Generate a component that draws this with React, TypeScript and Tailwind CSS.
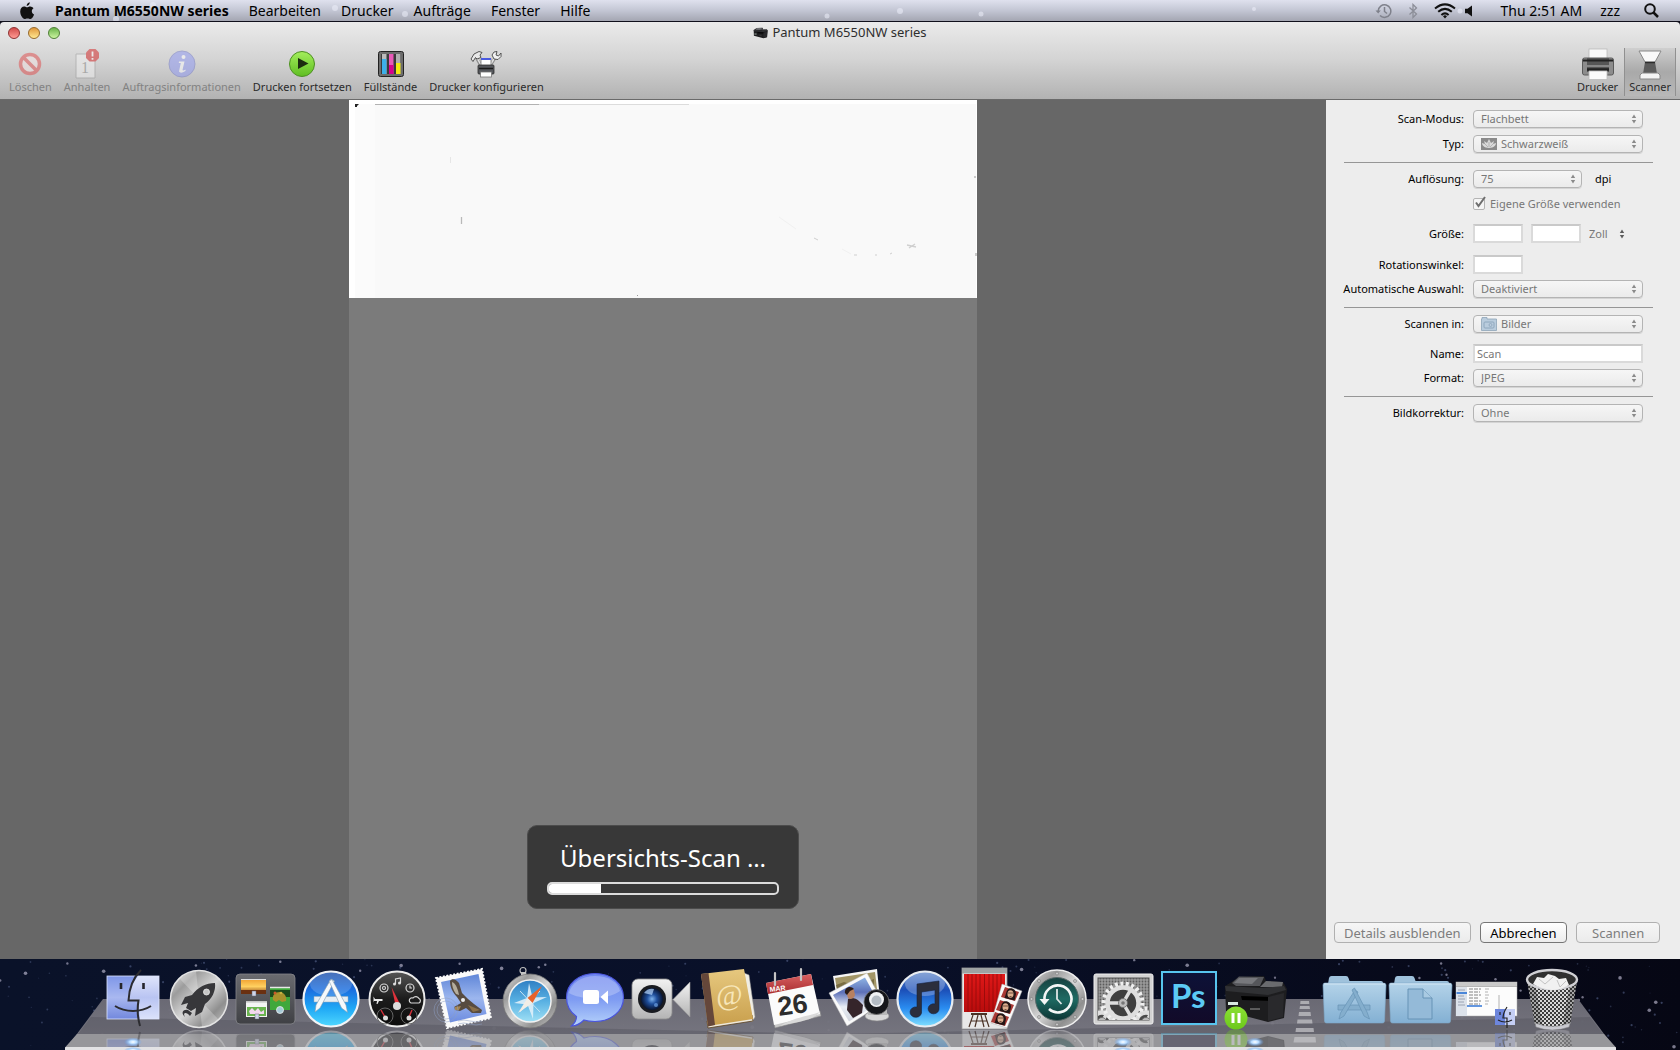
import React from "react";

type Kids = { children?: React.ReactNode };

/* ---------- shared gradients ---------- */

function Grad({ id, stops, x2 = 0, y2 = 1 }: { id: string; stops: string[]; x2?: number; y2?: number }) {
  return (
    <linearGradient id={id} x1="0" y1="0" x2={x2} y2={y2}>
      {stops.map((c, i) => (
        <stop key={i} offset={i / (stops.length - 1)} stopColor={c} />
      ))}
    </linearGradient>
  );
}

function SharedDefs() {
  return (
    <svg width="0" height="0" className="absolute" aria-hidden="true">
      <defs>
        <Grad id="g-finder" stops={["#7e96e8", "#a9b8f0", "#7288dd"]} />
        <Grad id="g-finder-light" stops={["#dfe5fb", "#b9c4f2", "#dbe2fb"]} />
        <Grad id="g-steel" stops={["#e8e8e8", "#9c9c9c", "#d8d8d8", "#8f8f8f", "#cfcfcf"]} x2={1} y2={1} />
        <Grad id="g-dark" stops={["#6a6b70", "#3f4044"]} />
        <Grad id="g-store" stops={["#1f4fa8", "#1b6fe0", "#1fa8f5", "#4fd8ff"]} />
        <Grad id="g-dash" stops={["#565656", "#1b1b1b", "#0c0c0c"]} />
        <Grad id="g-mail" stops={["#5f86d8", "#9cb6ee", "#6d8ce0"]} />
        <Grad id="g-safari" stops={["#2f7fc4", "#58b0e2", "#9fe0f5"]} />
        <Grad id="g-chat" stops={["#6f86ee", "#7f9cf2", "#b6d3fb"]} />
        <Grad id="g-silver" stops={["#f2f2f2", "#b4b4b4"]} />
        <Grad id="g-book" stops={["#e6c87f", "#c99f4c"]} />
        <Grad id="g-red" stops={["#d86060", "#a82c30"]} />
        <Grad id="g-itunes" stops={["#5e86c8", "#1c4fb8", "#2a8cf0", "#7fe0ff"]} />
        <Grad id="g-curtain" stops={["#e01818", "#b80c0c"]} />
        <Grad id="g-tm" stops={["#16403f", "#1f6a63", "#0c3434"]} />
        <Grad id="g-ps" stops={["#0d1238", "#120a28"]} />
        <Grad id="g-green" stops={["#8be035", "#6cc81a"]} />
        <Grad id="g-folder" stops={["#b4d3e9", "#83b0d3"]} />
        <Grad id="g-photo" stops={["#8fb4e4", "#5c70b8", "#e8edf4", "#d2d6de"]} />
        <Grad id="g-sun" stops={["#f0a030", "#ffd060", "#8a4010"]} />
        <Grad id="g-play" stops={["#a4ee5c", "#5fbe22"]} />
        <radialGradient id="g-lens">
          <stop offset="0" stopColor="#7fb4ee" />
          <stop offset="0.45" stopColor="#1f4f9c" />
          <stop offset="1" stopColor="#081430" />
        </radialGradient>
        <radialGradient id="g-glow">
          <stop offset="0" stopColor="#ffffff" />
          <stop offset="0.4" stopColor="#b8dcff" />
          <stop offset="1" stopColor="#5a9cf0" stopOpacity="0" />
        </radialGradient>
        <pattern id="p-mesh" width="4" height="4" patternUnits="userSpaceOnUse">
          <rect width="4" height="4" fill="#3c3c3c" />
          <path d="M0 0L4 4M4 0L0 4" stroke="#d8d8d8" strokeWidth="1" />
        </pattern>
        <pattern id="p-grill" width="3" height="3" patternUnits="userSpaceOnUse">
          <rect width="3" height="3" fill="#9a9a9a" />
          <circle cx="1.5" cy="1.5" r="0.9" fill="#5c5c5c" />
        </pattern>
        <clipPath id="c-reflect">
          <rect x="0" y="71" width="66" height="17" />
        </clipPath>
      </defs>
    </svg>
  );
}

/* ---------- dock icons ---------- */

function DockItem({ name, label, running, children }: Kids & { name: string; label: string; running?: boolean }) {
  return (
    <a href={"#" + name} aria-label={label} className="block w-[66px] shrink-0">
      <svg viewBox="0 0 66 91" className="block h-[91px] w-full" aria-hidden="true">
        <g id={"icon-" + name}>{children}</g>
        <g clipPath="url(#c-reflect)" opacity="0.35">
          <use href={"#icon-" + name} transform="translate(0 140) scale(1 -1)" />
        </g>
        {running && (
          <>
            <ellipse cx="33" cy="83" rx="9" ry="4.5" fill="url(#g-glow)" />
            <ellipse cx="33" cy="91" rx="9" ry="3" fill="url(#g-glow)" />
          </>
        )}
      </svg>
    </a>
  );
}

function Finder() {
  return (
    <>
      <rect x="7" y="17" width="52" height="43" fill="url(#g-finder)" />
      <path d="M38 17H59V60H39.500L38.500 42H29C29 33 32 24 38 17Z" fill="url(#g-finder-light)" />
      <rect x="7" y="17" width="52" height="43" fill="none" stroke="#dfe6ff" strokeWidth="0.8" />
      <path d="M21 24V30M43.500 24V30" stroke="#26262c" strokeWidth="2.600" />
      <path d="M41 11C33 19 29 30 28.500 41.500H38.500C37 50 38 60 40 67" fill="none" stroke="#2c2c30" strokeWidth="2" />
      <path d="M15 47C25 53.500 41 53.500 51 47" fill="none" stroke="#2c2c30" strokeWidth="2" />
    </>
  );
}

function Launchpad() {
  return (
    <>
      <circle cx="33" cy="40" r="28.500" fill="url(#g-steel)" stroke="#e4e4e4" strokeWidth="1.500" />
      <path d="M33 40L14 20A28 28 0 0 1 30 12ZM33 40L52 60A28 28 0 0 1 36 68Z" fill="#fff" opacity="0.25" />
      <path d="M49 24C40 24 32 28 26 36L19 38L15 46L22 44L20 49L25 52L30 49L29 57L36 53L39 45C46 40 50 32 49 24Z" fill="#37373a" />
      <path d="M22 51C16 50 15 55 19 58C16 53 21 53 24 57L26 54Z" fill="#37373a" />
      <circle cx="40.500" cy="33" r="3" fill="#c6c6c6" stroke="#eee" strokeWidth="0.8" />
    </>
  );
}

function MissionControl() {
  return (
    <>
      <rect x="4" y="15" width="59" height="50" rx="4" fill="url(#g-dark)" stroke="#85868b" strokeWidth="0.800" />
      <rect x="9" y="20" width="25" height="15" fill="url(#g-sun)" />
      <path d="M9 20.500H34" stroke="#ddd" />
      <path d="M9 31H34V35H9Z" fill="#6a3010" />
      <rect x="38" y="28" width="20" height="23" fill="#3fa83c" />
      <path d="M38 28.500H58" stroke="#e8e8e8" strokeWidth="1.500" />
      <path d="M38 31H58V38H38Z" fill="#1c4a1c" />
      <path d="M41 41C40 36 43 33 48 33C53 34 55 38 54 42L50 43L47 41L44 43Z" fill="#a8922c" />
      <circle cx="43" cy="34" r="1.500" fill="#ca5a2a" />
      <circle cx="49" cy="34" r="1.300" fill="#c8b040" />
      <rect x="14" y="42" width="21" height="16" fill="#f4f4f4" />
      <path d="M15 48H34V57H15Z" fill="#6ab450" />
      <path d="M17 52l3-3 3 3 3-3 3 4 3-2v4H18Z" fill="#f2d8f0" />
      <path d="M14 42.800H35" stroke="#c4c4c4" strokeWidth="1.500" />
      <path d="M20 32H24V37H20ZM23 55H27V60H23Z" fill="#cfd6ea" stroke="#667" strokeWidth="0.500" />
      <circle cx="48" cy="51" r="3.500" fill="#a5cbd8" stroke="#eee" strokeWidth="0.800" />
    </>
  );
}

function AppStore() {
  return (
    <>
      <circle cx="33" cy="40" r="27.500" fill="url(#g-store)" stroke="#f2f4f6" strokeWidth="2.200" />
      <ellipse cx="33" cy="25" rx="21" ry="12" fill="#fff" opacity="0.18" />
      <path d="M16 37.500H50V43H16Z" fill="#e6eef4" stroke="#9ab" strokeWidth="0.500" />
      <path d="M33 20L36.500 22L22 49L17 53L18 46Z" fill="#f6f9fb" stroke="#7f9ab0" strokeWidth="0.600" />
      <path d="M31 22L34 20.500L48 46L49.500 53.500L43.500 49Z" fill="#f6f9fb" stroke="#7f9ab0" strokeWidth="0.600" />
    </>
  );
}

function Dashboard() {
  return (
    <>
      <circle cx="33" cy="40" r="27.500" fill="url(#g-dash)" stroke="#ececec" strokeWidth="2" />
      <g fill="none" stroke="#d8d8d8" strokeWidth="1.200">
        <circle cx="20" cy="29" r="4" />
        <circle cx="20" cy="29" r="1.500" />
        <circle cx="46" cy="29" r="4" />
        <path d="M46 26.500V29H48" />
        <path d="M31.500 25V20L36.500 19V24" />
        <path d="M47 44H55A2.500 2.500 0 0 0 55 39.500A3.500 3.500 0 0 0 49 39A2.600 2.600 0 0 0 47 44Z" />
      </g>
      <path d="M9.500 37.500L11 40H18.500V42H15L13.500 45H12.500L13 42H10L9.500 43.500Z" fill="#e8e8e8" />
      <circle cx="30.500" cy="25" r="1.500" fill="#ddd" />
      <circle cx="35.500" cy="24" r="1.500" fill="#ddd" />
      <g fill="none" stroke="#666" strokeWidth="1">
        <circle cx="21" cy="57" r="8" />
        <circle cx="45" cy="57" r="8" />
      </g>
      <path d="M31.500 46L27.500 28L35.500 44Z" fill="#e0323c" />
      <path d="M21 58L17 51M45 58L48 51" stroke="#d8303a" strokeWidth="1.400" />
      <circle cx="33" cy="47" r="4" fill="#ddd" />
      <circle cx="21.500" cy="59" r="2.500" fill="#ddd" />
      <circle cx="45" cy="59" r="2.500" fill="#ddd" />
    </>
  );
}

function Mail() {
  return (
    <>
      <path d="M6 19L52 10L61 59L17 69Z" fill="#fafafa" stroke="#fafafa" strokeWidth="2" strokeDasharray="2 1.500" />
      <path d="M11 23L48.500 15L56.500 55L20 63.500Z" fill="url(#g-mail)" />
      <path d="M20 22C22 19 26 20 29 24L32 34C36 38 40 42 44 45L52 51L51 54L42 54L36 49L30 52L25 51L24 48L31 44L27 38C22 33 20 27 20 22Z" fill="#574b40" />
      <path d="M22 23C26 24 28 31 29 36L26 35C23 31 22 27 22 23Z" fill="#b5ad9c" />
      <path d="M38 46L50 51L43 53Z" fill="#8a6f48" />
      <path d="M25 48L31 47L29 51L25 51Z" fill="#a58450" />
      <circle cx="33" cy="41" r="2" fill="#eee" />
      <g fill="none" stroke="#8fa0c4" strokeWidth="1" opacity="0.500">
        <circle cx="16" cy="51" r="12" />
        <circle cx="16" cy="51" r="9" />
        <path d="M28 62q6-2 12 0t12 0M28 65q6-2 12 0t12 0" />
      </g>
    </>
  );
}

function Safari() {
  return (
    <>
      <circle cx="27" cy="11.500" r="3" fill="none" stroke="#bcbcbc" strokeWidth="1.200" />
      <path d="M25 13H30L31 17H25Z" fill="#c4c4c4" />
      <circle cx="34" cy="42" r="27" fill="url(#g-steel)" stroke="#777" strokeWidth="0.800" />
      <circle cx="34" cy="42" r="21" fill="url(#g-safari)" stroke="#f2f2f2" strokeWidth="1.500" />
      <path d="M33 24L36.500 38.500L51 38L37.500 44L37 60L31.500 45.500L18 44L31 39Z" fill="#dff0fa" opacity="0.900" />
      <path d="M24 32L44 53M44 32L24 53" stroke="#c8e4f4" strokeWidth="1" />
      <path d="M46 27L36.500 44L31.500 39Z" fill="#e8622a" />
      <path d="M22 54L36.500 44L31.500 39Z" fill="#f2ede6" />
    </>
  );
}

function IChat() {
  return (
    <>
      <path d="M33 14.500C49.500 14.500 61.500 25 61.500 38.500S49.500 62.500 33 62.500C29 62.500 25 62 22 61C18 65 13 67 9.500 67C13 64 14.500 61 14.500 57.500C8 53 4.500 46 4.500 38.500C4.500 25 16.500 14.500 33 14.500Z" fill="url(#g-chat)" stroke="#4a55dc" strokeWidth="1.200" />
      <path d="M33 17C46 17 56 23 58 32C48 40 20 42 7 34C9 24 20 17 33 17Z" fill="#fff" opacity="0.250" />
      <rect x="21" y="31" width="16" height="14" rx="2.500" fill="#fff" />
      <path d="M38.500 38L46 31.500V45Z" fill="#fff" />
    </>
  );
}

function FaceTime() {
  return (
    <>
      <rect x="4" y="20" width="40" height="40" rx="6" fill="url(#g-silver)" stroke="#8f8f8f" strokeWidth="0.800" />
      <path d="M45 40.500L62 23V58Z" fill="url(#g-silver)" stroke="#999" strokeWidth="0.600" />
      <circle cx="24" cy="40" r="14" fill="#191b20" />
      <circle cx="24" cy="40" r="11" fill="url(#g-lens)" />
      <path d="M16 34A10 10 0 0 1 26 30L24 36Z" fill="#b8d8ff" opacity="0.700" />
      <circle cx="28" cy="46" r="2" fill="#6fa4e8" opacity="0.700" />
    </>
  );
}

function Contacts() {
  return (
    <>
      <path d="M50 14L55 16L61 58L58 63Z" fill="#f0ede4" stroke="#999" strokeWidth="0.500" />
      <path d="M14 69L13 62L58 56L59 62Z" fill="#eee9dc" stroke="#5a4020" strokeWidth="0.800" />
      <path d="M7 15L50 10L59 60L14 67Z" fill="url(#g-book)" />
      <path d="M7 15L14.500 14L21 66L14 67.500Z" fill="#65473a" />
      <text x="22" y="46" fontFamily="Liberation Serif, serif" fontSize="29" fill="#f7e6b8" transform="rotate(-6 34 38)">@</text>
    </>
  );
}

function Calendar() {
  return (
    <>
      <path d="M14 64L60 52L61 57L15 69Z" fill="#c8c8c8" stroke="#888" strokeWidth="0.600" />
      <path d="M6 24L51 15L60 55L14 66Z" fill="#fbfbfb" />
      <path d="M6 24L51 15L53 26L8 35Z" fill="url(#g-red)" />
      <path d="M15 26V14M41 21V10" stroke="#c4c4c4" strokeWidth="2.200" strokeLinecap="round" />
      <path d="M20 67C40 62 52 62 60 53C50 57 34 58 20 67Z" fill="#dadada" />
      <g fontFamily="Liberation Sans, Arial, sans-serif" fontWeight="bold">
        <text x="10" y="33" fontSize="7" fill="#fff" transform="rotate(-7 10 33)">MAR</text>
        <text x="19" y="57" fontSize="27" fill="#2c2c2c" transform="rotate(-8 19 57)">26</text>
      </g>
    </>
  );
}

function IPhoto() {
  return (
    <>
      <path d="M7 17L51 10L54 40L12 46Z" fill="#f6f6f6" />
      <path d="M9 19L49 13L51 30L12 36Z" fill="#a39667" />
      <path d="M10 26l8-3 6 2 8-4 8 2 8-3v8l-36 6Z" fill="#7a6d42" />
      <path d="M3 34L41 14L57 44L21 67Z" fill="#fafafa" stroke="#bbb" strokeWidth="0.500" />
      <path d="M7 36L39 18.500L53 44L23 62.500Z" fill="url(#g-photo)" />
      <path d="M22 40C25 38 30 39 33 42L37 46L36 54L27 59L21 51Z" fill="#35252a" />
      <path d="M20 33C20 28 26 27 28 31L29 36C28 40 24 41 22 39Z" fill="#b78060" />
      <path d="M19 34C18 28 25 26 28 30L24 32L21 36Z" fill="#2a1c1a" />
      <ellipse cx="51" cy="57" rx="12" ry="5" fill="#d8d8d8" stroke="#888" strokeWidth="0.600" />
      <rect x="42" y="46" width="19" height="10" fill="#b9b9b9" />
      <circle cx="50.500" cy="43" r="12.500" fill="#15161a" stroke="#777" strokeWidth="0.800" />
      <circle cx="50.500" cy="40.500" r="7.500" fill="#f0f2f4" />
      <circle cx="50.500" cy="41.500" r="5" fill="#b4bcc4" />
    </>
  );
}

function ITunes() {
  return (
    <>
      <circle cx="33" cy="40" r="27.500" fill="url(#g-itunes)" stroke="#e8ecf0" strokeWidth="2.200" />
      <ellipse cx="33" cy="25" rx="20" ry="12" fill="#fff" opacity="0.250" />
      <path d="M25 25L47 22V49A5.500 5 0 1 1 43 45V31L29.500 33V52A5.800 5.200 0 1 1 25 48Z" fill="#2b2e3c" stroke="#16223c" strokeWidth="0.600" />
    </>
  );
}

function PhotoBooth() {
  return (
    <>
      <rect x="4" y="9" width="45" height="61" fill="#e8e8e8" stroke="#999" strokeWidth="0.800" />
      <rect x="4" y="9" width="45" height="5.500" fill="#9ea3a3" />
      <rect x="6" y="15" width="41" height="38" fill="url(#g-curtain)" />
      <path d="M10 15V53M14 15V53M18 15V53M22 15V53M26.500 15V53M31 15V53M35 15V53M39 15V53M43 15V53" stroke="#8f0a0a" strokeWidth="0.800" />
      <path d="M13 54H29V56H13Z" fill="#4a3226" />
      <path d="M15 56L11 68M27 56L31 68M20 56L17 68M23 56L26 68M13 62H29" fill="none" stroke="#4a3226" strokeWidth="1.200" />
      <path d="M44 25L64 32L49 69L33 64Z" fill="#fafafa" stroke="#aaa" strokeWidth="0.500" />
      {[[45, 28], [40, 41], [35, 53]].map(([x, y], i) => (
        <g key={i} transform={`translate(${x} ${y})`}>
          <path d="M2 0L16 5L12 14L-2 10Z" fill="#a83834" />
          <path d="M6 1.500C10 0.500 13 3 13 7L11.500 13.500L1.500 11C3 8 3 3 6 1.500Z" fill="#241616" />
          <ellipse cx="7.500" cy="7" rx="3" ry="3.800" fill="#dcae8e" />
          <path d="M5 6H10M6.500 9.500H8.500" stroke="#4a2620" strokeWidth="0.700" />
        </g>
      ))}
    </>
  );
}

function TimeMachine() {
  return (
    <>
      <circle cx="33" cy="40" r="29" fill="url(#g-steel)" stroke="#f0f0f0" strokeWidth="1.500" />
      <circle cx="33" cy="40" r="21.500" fill="url(#g-tm)" stroke="#566" strokeWidth="1" />
      {[[33, 14.500], [33, 65.500], [7.500, 40], [58.500, 40], [15, 22], [51, 22], [15, 58], [51, 58]].map(([x, y], i) => (
        <circle key={i} cx={x} cy={y} r="1.500" fill="#c9c9c9" stroke="#777" strokeWidth="0.600" />
      ))}
      <path d="M20.500 41A13.500 13.500 0 1 1 25 50" fill="none" stroke="#f4f6f6" strokeWidth="2.600" />
      <path d="M15.500 40H25.500L20.500 46Z" fill="#f4f6f6" />
      <path d="M33 30V40L37.500 45" fill="none" stroke="#dfe6e6" strokeWidth="1.800" />
    </>
  );
}

function GearShape({ cx, cy, r }: { cx: number; cy: number; r: number }) {
  return (
    <g transform={`translate(${cx} ${cy})`}>
      <circle r={r + 2} fill="none" stroke="#efefef" strokeWidth="5" strokeDasharray="2.800 2.600" />
      <circle r={r - 1.500} fill="none" stroke="#dedede" strokeWidth="4.500" />
      <path d={`M0 0L${-r + 3} 0M0 0L${(r - 3) / 2} ${-(r - 3) * 0.87}M0 0L${(r - 3) / 2} ${(r - 3) * 0.87}`} stroke="#dedede" strokeWidth="3.500" />
      <circle r="4.500" fill="#bdbdbd" stroke="#666" strokeWidth="0.800" />
      <circle r="1.800" fill="#777" />
    </g>
  );
}

function SystemPreferences() {
  return (
    <>
      <clipPath id="c-prefs">
        <rect x="8" y="19" width="51" height="42" />
      </clipPath>
      <rect x="4" y="15" width="59" height="50" rx="2" fill="#d2d2d2" stroke="#f0f0f0" />
      <rect x="8" y="19" width="51" height="42" fill="url(#p-grill)" stroke="#555" strokeWidth="1" />
      <g clipPath="url(#c-prefs)">
        <circle cx="33" cy="44" r="17" fill="#3f3f3f" />
        <circle cx="12" cy="63" r="11" fill="#4a4a4a" />
        <circle cx="56" cy="63" r="11" fill="#4a4a4a" />
        <GearShape cx={12} cy={63} r={11} />
        <GearShape cx={56} cy={63} r={11} />
        <GearShape cx={33} cy={44} r={17} />
      </g>
    </>
  );
}

function Photoshop() {
  return (
    <>
      <rect x="6" y="13" width="54" height="52" fill="url(#g-ps)" stroke="#58c4ee" strokeWidth="2" />
      <text x="15" y="49" fontFamily="Lato, Open Sans, sans-serif" fontWeight="bold" fontSize="33" fill="#5ccaf5">Ps</text>
    </>
  );
}

function PrinterApp({ paused = true }: { paused?: boolean }) {
  return (
    <>
      <path d="M3 27L8 24L17 18L42 17L44 22L61 23L65 30L62 59L46 63L4 52Z" fill="#1d1d1f" />
      <path d="M10 24L17 17.500L42 18L38 27L14 27Z" fill="#55565a" />
      <path d="M17 19L36 19L30 25L12 24Z" fill="#77787c" />
      <path d="M38 28L44 22L61 23L60 28Z" fill="#6a6b6e" />
      <path d="M3 27L40 29L62 27L64 31L46 36L4 32Z" fill="#303134" />
      <path d="M19 37L54 38V42L20 41Z" fill="#000" />
      <path d="M46 38L62 34L61 58L46 62Z" fill="#29292c" />
      <rect x="6" y="43" width="10" height="3" fill="#d8e8e0" />
      <path d="M28 50H38" stroke="#999" strokeWidth="1" />
      {paused && (
        <>
          <circle cx="14" cy="59" r="11.500" fill="url(#g-green)" />
          <path d="M11 54V64M17 54V64" stroke="#fff" strokeWidth="3" />
        </>
      )}
    </>
  );
}

function FolderBase() {
  return (
    <>
      <path d="M7 25L8 19Q8.500 17 10.500 17H25Q27 17 27.500 19L28.500 22H60Q62 22 62 24V28H7Z" fill="#9fc2dc" />
      <path d="M2 26Q2 24 4 24H62Q65 24 65 26L63.500 62Q63.500 64 61.500 64H5.500Q3.500 64 3.500 62Z" fill="url(#g-folder)" stroke="#7fa9c9" strokeWidth="0.600" />
      <path d="M3 25H64" stroke="#d4e7f4" strokeWidth="1" />
    </>
  );
}

function ApplicationsFolder() {
  return (
    <>
      <FolderBase />
      <g fill="#84aecd" stroke="#6793b6" strokeWidth="0.700">
        <path d="M17 46H49V51H17Z" />
        <path d="M34 31L37 33L23 57L18 60L19.500 54Z" />
        <path d="M31 31L33.500 29L46 53L48.500 60L43 57Z" />
      </g>
    </>
  );
}

function DocumentsFolder() {
  return (
    <>
      <FolderBase />
      <path d="M21 30H36L45 39V60H21Z" fill="#94bad8" stroke="#6793b6" strokeWidth="1" />
      <path d="M36 30V39H45" fill="#a9cae2" stroke="#6793b6" strokeWidth="1" />
    </>
  );
}

function MinimizedWindow() {
  return (
    <>
      <rect x="3" y="23" width="61" height="34" fill="#fcfcfc" stroke="#aaa" strokeWidth="0.500" />
      <rect x="3" y="23" width="61" height="4.500" fill="#c9c9c9" />
      <path d="M3 27.500H64" stroke="#888" strokeWidth="0.500" />
      <rect x="3" y="28" width="11" height="29" fill="#dce2ea" />
      <path d="M3.500 34H14" stroke="#4a86d8" strokeWidth="2" />
      <path d="M5 31H12M5 37H11M5 40H12M5 43H11M5 46H12" stroke="#8a94a4" strokeWidth="0.800" />
      <path d="M16 30H28M16 33H27M16 36H28M16 39H26M16 42H28M16 45H27" stroke="#777" strokeWidth="0.900" strokeDasharray="4 1" />
      <path d="M14 47H29" stroke="#3c7cd8" strokeWidth="1.600" />
      <path d="M32 30H36M32 33H35M32 36H36M32 39H35M32 42H36M32 45H35M46 36V52" stroke="#aaa" strokeWidth="0.900" />
      <rect x="42" y="50" width="10" height="16" fill="#6d86dc" />
      <rect x="52" y="50" width="10" height="16" fill="#c4cef4" />
      <path d="M54 48C50 54 50 56 50 59H54V69M45 61Q52 65 59 61M47 53V56M57 53V56" fill="none" stroke="#222" strokeWidth="1.200" />
    </>
  );
}

function Trash() {
  return (
    <>
      <path d="M8 22L16 66Q33 73 51 66L58 22Z" fill="url(#p-mesh)" />
      <path d="M8 22L16 66Q20 69 24 69L16 24ZM58 22L51 66Q47 69 43 69L51 24Z" fill="#222" opacity="0.280" />
      <ellipse cx="33" cy="20.500" rx="25" ry="9.500" fill="#303030" stroke="#d0d0d4" strokeWidth="2.400" />
      <path d="M14 25L18 18L25 19L29 15L36 17L40 20L47 19L50 26Q42 31 33 31Q22 30 14 25Z" fill="#f1f1f1" />
      <path d="M20 20L26 25L34 18M38 21L41 28L47 22" fill="none" stroke="#c3c3c3" strokeWidth="1" />
      <path d="M16 64Q33 71 51 64L50 68Q33 74 17 68Z" fill="#c9c9d0" stroke="#888" strokeWidth="0.500" />
    </>
  );
}

function DockSeparator() {
  return (
    <svg viewBox="0 0 33 91" className="block h-[91px] w-[33px] shrink-0" aria-hidden="true">
      <g fill="#c2c2c6" opacity="0.750">
        <path d="M12.500 42H21L21.300 45H12.200Z" />
        <path d="M12 47H21.500L22 50H11.500Z" />
        <path d="M11 53H22.500L23 57H10.500Z" />
        <path d="M9.500 60.500H24L24.500 64.500H9Z" />
        <path d="M8 69H25.500L26 73H7.500Z" />
        <path d="M6.500 78H27.500L28 83.500H5.500Z" />
      </g>
    </svg>
  );
}

function Stars() {
  const dots: React.ReactNode[] = [];
  let seed = 17;
  const next = () => {
    seed = (seed * 16807) % 2147483647;
    return seed / 2147483647;
  };
  for (let i = 0; i < 420; i++) {
    const x = next() * 1680;
    const y = next() * 91;
    const k = next();
    dots.push(
      <circle key={i} cx={x} cy={y} r={k > 0.93 ? 1.8 : 0.6 + k * 0.7} fill={k > 0.8 ? "#c2bfd6" : "#5f6e98"} opacity={0.2 + k * 0.45} />,
    );
  }
  return (
    <svg viewBox="0 0 1680 91" preserveAspectRatio="xMidYMid slice" className="absolute inset-0 h-full w-full" aria-hidden="true">
      {dots}
    </svg>
  );
}

function Dock() {
  return (
    <nav aria-label="Dock" className="relative h-[91px] shrink-0 overflow-hidden bg-linear-to-r from-[#0a1229] via-[#091029] to-[#060714]">
      <Stars />
      <div className="absolute right-[64px] bottom-0 left-[65px] h-[51px] bg-linear-to-b from-[#6f6e78]/95 to-[#807f88]/95 [clip-path:polygon(38px_0,calc(100%-38px)_0,100%_100%,0_100%)]" />
      <div className="absolute right-[64px] bottom-[16px] left-[65px] h-[17px] bg-[#45444e]/30 [clip-path:polygon(26px_0,50%_100%,calc(100%-26px)_0,calc(100%-13px)_100%,13px_100%)]" />
      <div className="absolute right-[64px] bottom-0 left-[65px] h-[16px] border-b-3 border-[#e2e2e4] bg-[#96969a] [clip-path:polygon(12px_0,calc(100%-12px)_0,100%_85%,100%_100%,0_100%,0_85%)]" />
      <div className="relative flex justify-center pl-1">
        <DockItem name="finder" label="Finder" running><Finder /></DockItem>
        <DockItem name="launchpad" label="Launchpad"><Launchpad /></DockItem>
        <DockItem name="mission" label="Mission Control"><MissionControl /></DockItem>
        <DockItem name="appstore" label="App Store"><AppStore /></DockItem>
        <DockItem name="dashboard" label="Dashboard"><Dashboard /></DockItem>
        <DockItem name="mail" label="Mail"><Mail /></DockItem>
        <DockItem name="safari" label="Safari"><Safari /></DockItem>
        <DockItem name="messages" label="iChat"><IChat /></DockItem>
        <DockItem name="facetime" label="FaceTime"><FaceTime /></DockItem>
        <DockItem name="contacts" label="Adressbuch"><Contacts /></DockItem>
        <DockItem name="calendar" label="iCal"><Calendar /></DockItem>
        <DockItem name="iphoto" label="iPhoto"><IPhoto /></DockItem>
        <DockItem name="itunes" label="iTunes"><ITunes /></DockItem>
        <DockItem name="photobooth" label="Photo Booth"><PhotoBooth /></DockItem>
        <DockItem name="timemachine" label="Time Machine"><TimeMachine /></DockItem>
        <DockItem name="preferences" label="Systemeinstellungen" running><SystemPreferences /></DockItem>
        <DockItem name="photoshop" label="Photoshop"><Photoshop /></DockItem>
        <DockItem name="printer" label="Pantum M6550NW series" running><PrinterApp /></DockItem>
        <DockSeparator />
        <DockItem name="applications" label="Programme"><ApplicationsFolder /></DockItem>
        <DockItem name="documents" label="Dokumente"><DocumentsFolder /></DockItem>
        <DockItem name="minimized" label="Finder-Fenster"><MinimizedWindow /></DockItem>
        <DockItem name="trash" label="Papierkorb"><Trash /></DockItem>
      </div>
    </nav>
  );
}

/* ---------- menu bar ---------- */

function MenuBar() {
  return (
    <header className="relative flex h-[22px] shrink-0 items-center border-b border-[#10101c] bg-linear-to-b from-[#dfe1ee] via-[#c3c6d4] to-[#a4a6b2] pr-[21px] pl-[19px] text-[14px] text-black">
      <svg viewBox="0 0 1680 21" preserveAspectRatio="none" className="absolute inset-0 h-full w-full" aria-hidden="true">
        <g fill="#eef0fb" opacity="0.550">
          <circle cx="116" cy="19" r="3" />
          <circle cx="153" cy="5" r="3" />
          <circle cx="335" cy="8" r="3" />
          <circle cx="405" cy="14" r="3" />
          <circle cx="827" cy="16" r="2.500" />
          <circle cx="900" cy="11" r="3" />
          <circle cx="981" cy="14" r="2.500" />
          <circle cx="1460" cy="11" r="2.500" />
          <circle cx="1254" cy="9" r="2" />
        </g>
      </svg>
      <nav className="relative flex items-center gap-5">
        <button aria-label="Apple-Menü" className="block">
          <svg viewBox="0 0 15 18" className="h-[18px] w-[16px]" fill="#111" aria-hidden="true">
            <path d="M10.300 0.300C10.400 2 9 3.900 7.200 4C7 2.300 8.600 0.600 10.300 0.300ZM7.600 5.300C8.300 5.300 9.200 4.500 10.700 4.500C11.900 4.500 13.200 5.200 14 6.300C11.500 7.800 11.900 11.400 14.600 12.500C13.900 14.400 12.500 17 11 17C10 17 9.300 16.400 8 16.400C6.700 16.400 6 17 5.100 17C3.200 17 0.700 13 0.700 9.500C0.700 6.200 2.700 4.500 4.700 4.500C6 4.500 6.900 5.300 7.600 5.300Z" />
          </svg>
        </button>
        <button className="font-bold">Pantum M6550NW series</button>
        <button>Bearbeiten</button>
        <button>Drucker</button>
        <button>Aufträge</button>
        <button>Fenster</button>
        <button>Hilfe</button>
      </nav>
      <div className="relative ml-auto flex items-center">
        <button aria-label="Time Machine" className="mr-4">
          <svg viewBox="0 0 17 16" className="h-[16px] w-[17px]" fill="none" stroke="#7f818b" strokeWidth="1.500" aria-hidden="true">
            <path d="M3.200 8A6.300 6.300 0 1 1 5 12.500" />
            <path d="M0.500 7.500L3.200 10.500L5.800 7.500" fill="#7f818b" stroke="none" />
            <path d="M9.500 4V8.500L12 10.500" />
          </svg>
        </button>
        <button aria-label="Bluetooth" className="mr-4">
          <svg viewBox="0 0 10 16" className="h-[16px] w-[10px]" fill="none" stroke="#8c8e98" strokeWidth="1.300" aria-hidden="true">
            <path d="M1.500 4.500L8.500 11L5 14.500V1.500L8.500 5L1.500 11.500" />
          </svg>
        </button>
        <button aria-label="WLAN" className="mr-2">
          <svg viewBox="0 0 22 16" className="h-[16px] w-[22px]" fill="none" stroke="#111" strokeWidth="2" aria-hidden="true">
            <path d="M1 5.500Q11 -2.800 21 5.500M4.200 8.800Q11 3 17.800 8.800M7.400 12Q11 8.800 14.600 12" />
            <path d="M9 13.200Q11 11.500 13 13.200L11 15.500Z" fill="#111" stroke="none" />
          </svg>
        </button>
        <button aria-label="Lautstärke" className="mr-[27px]">
          <svg viewBox="0 0 9 12" className="h-[12px] w-[9px]" fill="#111" aria-hidden="true">
            <path d="M1 3.800H3.500L8 0.500V11.500L3.500 8.200H1Z" />
          </svg>
        </button>
        <time className="mr-[18px]">Thu 2:51 AM</time>
        <button className="mr-[24px]">zzz</button>
        <button aria-label="Spotlight">
          <svg viewBox="0 0 15 15" className="h-[15px] w-[15px]" fill="none" stroke="#111" strokeWidth="2" aria-hidden="true">
            <circle cx="6" cy="6" r="4.800" />
            <path d="M9.500 9.500L14 14" strokeWidth="2.500" />
          </svg>
        </button>
      </div>
    </header>
  );
}

/* ---------- toolbar ---------- */

function Tool({ label, disabled, selected, children }: Kids & { label: string; disabled?: boolean; selected?: boolean }) {
  return (
    <button
      disabled={disabled}
      aria-pressed={selected}
      className={
        selected
          ? "flex h-[48px] flex-col items-center border-x border-[#909090] bg-linear-to-b from-[#cfcfcf] via-[#a9a9a9] to-[#b8b8b8] px-[4px]"
          : "flex h-[48px] flex-col items-center"
      }
    >
      <span className={disabled ? "flex h-[32px] items-center opacity-50" : "flex h-[32px] items-center"}>{children}</span>
      <span className={disabled ? "text-[11px] leading-[14px] text-[#828282]" : "text-[11px] leading-[14px] text-[#2a2a2a]"}>{label}</span>
    </button>
  );
}

function Toolbar() {
  return (
    <div className="shrink-0 rounded-t-sm border-b border-[#6a6a6a] bg-linear-to-b from-[#ebebeb] via-[#d3d3d3] to-[#b2b2b2]">
      <div className="relative flex h-[22px] items-center justify-center">
        <div className="absolute left-2 flex gap-2">
          <button aria-label="Schließen" className="h-3 w-3 rounded-full border border-[#8e3030] bg-linear-to-b from-[#d04a4a] to-[#ff9a94]" />
          <button aria-label="Minimieren" className="h-3 w-3 rounded-full border border-[#96692a] bg-linear-to-b from-[#e0983a] to-[#ffe890]" />
          <button aria-label="Vergrößern" className="h-3 w-3 rounded-full border border-[#4f7f36] bg-linear-to-b from-[#6ab44a] to-[#ccf5a0]" />
        </div>
        <h1 className="flex items-center gap-[4px] text-[13px] text-[#2e2e2e]">
          <svg viewBox="0 15 66 50" className="h-[12px] w-[15px]" aria-hidden="true">
            <PrinterApp paused={false} />
          </svg>
          Pantum M6550NW series
        </h1>
      </div>
      <div className="flex h-[55px] items-start pr-1 pl-[9px]">
        <div className="flex gap-3 pt-[4px]">
          <Tool label="Löschen" disabled>
            <svg viewBox="0 0 26 26" className="h-[26px] w-[26px]" fill="none" aria-hidden="true">
              <circle cx="13" cy="13" r="9.500" fill="#f4e4e4" stroke="#e04a4a" strokeWidth="3.500" />
              <path d="M6.500 6.500L19.500 19.500" stroke="#e04a4a" strokeWidth="3.500" />
            </svg>
          </Tool>
          <Tool label="Anhalten" disabled>
            <svg viewBox="0 0 24 30" className="h-[30px] w-[24px]" aria-hidden="true">
              <path d="M1 5H20V29H1Z" fill="#f2f2f2" stroke="#9a9a9a" />
              <text x="6" y="24" fontFamily="Liberation Serif, serif" fontSize="16" fill="#888">1</text>
              <path d="M14.500 0H20.500L24 3.500V9L20.500 12.500H14.500L11 9V3.500Z" fill="#d42020" />
              <path d="M17.500 2.500V7.500M17.500 9V10.800" stroke="#fff" strokeWidth="1.800" />
            </svg>
          </Tool>
          <Tool label="Auftragsinformationen" disabled>
            <svg viewBox="0 0 28 28" className="h-[28px] w-[28px]" aria-hidden="true">
              <circle cx="14" cy="14" r="13" fill="#8c96f4" stroke="#7078c8" />
              <circle cx="15.500" cy="7" r="2" fill="#fff" />
              <path d="M11 11.500H16.500L14.500 20Q15 21 17.500 19.500V21Q12.500 24 11 21.500L12.800 13H10.800Z" fill="#fff" />
            </svg>
          </Tool>
          <Tool label="Drucken fortsetzen">
            <svg viewBox="0 0 28 28" className="h-[28px] w-[28px]" aria-hidden="true">
              <circle cx="14" cy="14" r="12.500" fill="url(#g-play)" stroke="#4d8f22" />
              <path d="M10 8L20.500 13.500L10 19Z" fill="#1c2c10" />
            </svg>
          </Tool>
          <Tool label="Füllstände">
            <svg viewBox="0 0 26 26" className="h-[26px] w-[26px]" aria-hidden="true">
              <rect x="0.500" y="0.500" width="25" height="25" rx="2" fill="#6c6c6c" stroke="#222" />
              <path d="M3 3H23V23H3Z" fill="#3a3a3a" />
              <rect x="4" y="3" width="4.500" height="20" fill="#bbb" />
              <rect x="11" y="3" width="4.500" height="20" fill="#e85ab8" />
              <rect x="18" y="3" width="4.500" height="20" fill="#b0b0b0" />
              <rect x="4" y="8" width="4.500" height="15" fill="#3cb0ea" />
              <rect x="11" y="14" width="4.500" height="9" fill="#d8008c" />
              <rect x="18" y="12" width="4.500" height="11" fill="#f4ea10" />
            </svg>
          </Tool>
          <Tool label="Drucker konfigurieren">
            <svg viewBox="0 0 32 28" className="h-[28px] w-[32px]" aria-hidden="true">
              <path d="M6 7L11 16M25 8L20 16" stroke="#8e8e8e" strokeWidth="3" />
              <path d="M6.500 7L11.500 16M24.500 8L19.500 16" stroke="#e2e2e2" strokeWidth="1.500" />
              <path d="M1 9L4 4L9 1.500L12 2.500L10 5L11 7.500L7 9L5.500 7.500L3 11.500Z" fill="#e8e8e8" stroke="#444" strokeWidth="0.900" />
              <path d="M24 2L22 5L24 9L28 9.500L31 6.500V3L28.500 6L26 5L27 1.500Z" fill="#f2f2f2" stroke="#444" strokeWidth="0.900" />
              <rect x="11" y="9" width="10" height="8" fill="#fff" stroke="#777" strokeWidth="0.800" />
              <path d="M11 9H21" stroke="#4a5ae0" strokeWidth="2" />
              <rect x="8" y="15" width="16" height="9" rx="1" fill="#55575c" stroke="#2c2c2c" strokeWidth="0.800" />
              <path d="M9 18.500H23" stroke="#1a1a1a" strokeWidth="1.500" />
              <rect x="10.500" y="22" width="11" height="5" fill="#fff" stroke="#777" strokeWidth="0.800" />
            </svg>
          </Tool>
        </div>
        <div className="ml-auto flex gap-[6px] pt-[4px]">
          <Tool label="Drucker">
            <svg viewBox="0 0 32 32" className="h-[32px] w-[32px]" aria-hidden="true">
              <rect x="7" y="1" width="18" height="11" fill="#f8f8f8" stroke="#bbb" strokeWidth="0.800" />
              <rect x="0.500" y="10" width="31" height="17" rx="2" fill="#8c8c8c" stroke="#5a5a5a" />
              <rect x="5" y="10" width="22" height="14" fill="#565656" />
              <path d="M1 12.500H31" stroke="#222" strokeWidth="2" />
              <path d="M5 18H27" stroke="#999" strokeWidth="1.500" />
              <path d="M5 21.500H27" stroke="#222" strokeWidth="2.500" />
              <path d="M7 23H25V31.500H7Z" fill="#fbfbfb" stroke="#bbb" strokeWidth="0.800" />
            </svg>
          </Tool>
          <Tool label="Scanner" selected>
            <svg viewBox="0 0 24 32" className="h-[32px] w-[24px]" aria-hidden="true">
              <path d="M1 3H23L17 14H7Z" fill="#fafafa" stroke="#888" />
              <path d="M7 14H17L19 26H5Z" fill="#5c5c5c" />
              <path d="M7 14.500H17" stroke="#2c2c2c" strokeWidth="1.500" />
              <path d="M4 25L2 27V31H22V27L20 25Z" fill="#f4f4f4" stroke="#888" />
            </svg>
          </Tool>
        </div>
      </div>
    </div>
  );
}

/* ---------- preview ---------- */

function Preview() {
  return (
    <main className="relative flex flex-1 justify-center bg-[#676767]">
      <div className="w-[628px] bg-[#7b7b7b]">
        <svg viewBox="0 0 628 198" className="block w-full" role="img" aria-label="Vorschau">
          <rect width="628" height="198" fill="#fff" />
          <rect x="6" y="4" width="621" height="194" fill="#f9f9f9" />
          <rect x="6" y="4" width="20" height="194" fill="#fbfbfb" />
          <path d="M6 4H10L8 6V7H6Z" fill="#222" />
          <path d="M26 4.500H190" stroke="#b2b2b2" strokeWidth="1" />
          <path d="M190 4.500H340" stroke="#dcdcdc" strokeWidth="1" />
          <path d="M101.500 57V63" stroke="#e6e6e6" />
          <path d="M112.500 117V124" stroke="#b9b9b9" strokeWidth="1.300" />
          <path d="M465 138L469 140M505 155H508M526 155H528M541 154L543 153" stroke="#cfcfcf" />
          <path d="M430 117L447 129M493 149L502 154" stroke="#f1f1f1" />
          <path d="M558 145L567 147M560 148L566 144" stroke="#d0d0d0" strokeWidth="1.300" />
          <path d="M288.500 195V196M625 77H627M627 153V156" stroke="#9a9a9a" />
        </svg>
      </div>
      <section className="absolute bottom-[50px] flex w-[272px] flex-col items-center rounded-[10px] border border-[#4c4c4c] bg-[#383838] px-[19px] pt-[16px] pb-[13px]">
        <p className="text-[24px] leading-8 text-white">Übersichts-Scan …</p>
        <div role="progressbar" aria-valuenow={23} aria-label="Übersichts-Scan" className="mt-[8px] h-[13px] w-full overflow-hidden rounded-[5px] border-2 border-[#dcdcdc]">
          <div className="h-full bg-white" style={{ width: "23%" }} />
        </div>
      </section>
    </main>
  );
}

/* ---------- side panel ---------- */

function Arrows({ dark }: { dark?: boolean }) {
  return (
    <svg viewBox="0 0 6 10" className="pointer-events-none absolute right-[6px] h-[10px] w-[6px]" fill={dark ? "#5c5c5c" : "#8a8a8a"} aria-hidden="true">
      <path d="M3 0.500L5.200 4H0.800ZM3 9.500L5.200 6H0.800Z" />
    </svg>
  );
}

function Row({ id, label, children }: Kids & { id: string; label: string }) {
  return (
    <div className="flex items-center gap-[9px]">
      <label htmlFor={id} className="w-[138px] shrink-0 text-right text-black">{label}</label>
      {children}
    </div>
  );
}

function Popup({ id, value, short, icon }: { id: string; value: string; short?: boolean; icon?: React.ReactNode }) {
  return (
    <div className={short ? "relative flex w-[109px] items-center" : "relative flex w-[170px] items-center"}>
      {icon && <span className="pointer-events-none absolute left-[8px]">{icon}</span>}
      <select
        id={id}
        disabled
        className={
          (icon ? "pl-[27px] " : "pl-[7px] ") +
          "h-[18px] w-full appearance-none rounded-[4px] border border-[#b4b4b4] bg-linear-to-b from-[#f6f6f6] to-[#ebebeb] text-[#777777] opacity-100 shadow-[0_1px_0_#d4d4d4]"
        }
      >
        <option>{value}</option>
      </select>
      <Arrows />
    </div>
  );
}

function Field({ id, value, label, wide }: { id: string; value?: string; label?: string; wide?: boolean }) {
  return (
    <input
      id={id}
      aria-label={label}
      disabled
      defaultValue={value}
      className={(wide ? "w-[170px] " : "w-[50px] ") + "h-[19px] border-2 border-[#dadada] border-t-[#c9c9c9] bg-white px-[2px] text-[#777777]"}
    />
  );
}

function Rule() {
  return (
    <div className="pt-[9px] pb-[7px]">
      <hr className="mr-[9px] ml-[18px] border-t border-[#969696]" />
    </div>
  );
}

function SidePanel() {
  return (
    <aside className="flex w-[354px] shrink-0 flex-col bg-[#ededed] text-[11px] leading-4">
      <form className="flex flex-col pt-[10px] pr-[18px]">
        <div className="flex flex-col gap-[7px]">
          <Row id="mode" label="Scan-Modus:"><Popup id="mode" value="Flachbett" /></Row>
          <Row id="type" label="Typ:">
            <Popup
              id="type"
              value="Schwarzweiß"
              icon={
                <svg viewBox="0 0 16 12" className="h-[12px] w-[16px]" aria-hidden="true">
                  <rect width="16" height="12" fill="#8b8b8b" />
                  <path d="M8 10C3 10 1 7 1 5L4 6L3 3L6 5L8 1L10 5L13 3L12 6L15 5C15 7 13 10 8 10Z" fill="#dadada" />
                  <path d="M8 9V4M7 9L4 6M9 9L12 6" stroke="#9c9c9c" strokeWidth="0.600" />
                </svg>
              }
            />
          </Row>
        </div>
        <Rule />
        <Row id="resolution" label="Auflösung:">
          <Popup id="resolution" value="75" short />
          <span className="ml-1 text-black">dpi</span>
        </Row>
        <div className="mt-2 ml-[147px] flex items-center gap-[5px]">
          <span className="relative flex h-[12px] w-[12px]">
            <input id="custom" type="checkbox" defaultChecked disabled className="h-[12px] w-[12px] appearance-none rounded-[2px] border border-[#b4b4b4] bg-[#f5f5f5]" />
            <svg viewBox="0 0 14 14" className="pointer-events-none absolute -top-[2px] left-0 h-[14px] w-[14px]" fill="none" stroke="#6e6e6e" strokeWidth="2" aria-hidden="true">
              <path d="M3 6.500L5.500 10L12 1" />
            </svg>
          </span>
          <label htmlFor="custom" className="text-[#777777]">Eigene Größe verwenden</label>
        </div>
        <div className="mt-3 flex flex-col gap-3">
          <Row id="width" label="Größe:">
            <div className="flex gap-2">
              <Field id="width" />
              <Field id="height" label="Höhe" />
              <span className="relative flex w-[42px] items-center">
                <select aria-label="Einheit" disabled className="h-[18px] w-full appearance-none text-[#777777] opacity-100">
                  <option>Zoll</option>
                </select>
                <Arrows dark />
              </span>
            </div>
          </Row>
          <Row id="rotation" label="Rotationswinkel:"><Field id="rotation" /></Row>
        </div>
        <div className="mt-[6px]">
          <Row id="auto" label="Automatische Auswahl:"><Popup id="auto" value="Deaktiviert" /></Row>
        </div>
        <Rule />
        <Row id="target" label="Scannen in:">
          <Popup
            id="target"
            value="Bilder"
            icon={
              <svg viewBox="0 0 16 14" className="h-[14px] w-[16px]" aria-hidden="true">
                <path d="M0.500 2H1V0.500H6V2H15.500V13.500H0.500Z" fill="#b9ccdd" stroke="#8ea4b8" strokeWidth="0.800" />
                <rect x="3" y="5" width="10" height="6" rx="1" fill="none" stroke="#8ba3ba" strokeWidth="0.900" />
                <circle cx="9.500" cy="8" r="1.500" fill="none" stroke="#8ba3ba" strokeWidth="0.800" />
              </svg>
            }
          />
        </Row>
        <div className="mt-[11px] flex flex-col gap-[6px]">
          <Row id="name" label="Name:"><Field id="name" value="Scan" wide /></Row>
          <Row id="format" label="Format:"><Popup id="format" value="JPEG" /></Row>
        </div>
        <Rule />
        <Row id="correction" label="Bildkorrektur:"><Popup id="correction" value="Ohne" /></Row>
      </form>
      <div className="mt-auto flex items-center gap-[9px] pr-5 pb-4 pl-2 text-[13px]">
        <button disabled className="h-[21px] w-[137px] rounded-[4px] border border-[#b0b0b0] bg-linear-to-b from-[#f6f6f6] to-[#ebebeb] text-[#7d7d7d]">Details ausblenden</button>
        <button className="h-[21px] w-[88px] rounded-[4px] border border-[#767676] bg-linear-to-b from-white to-[#ececec] text-black">Abbrechen</button>
        <button disabled className="h-[21px] w-[84px] rounded-[4px] border border-[#b0b0b0] bg-linear-to-b from-[#f6f6f6] to-[#ebebeb] text-[#7d7d7d]">Scannen</button>
      </div>
    </aside>
  );
}

export default function App() {
  return (
    <div className="flex min-h-screen flex-col bg-[#10101c] font-['Noto_Sans','Open_Sans',sans-serif]">
      <SharedDefs />
      <MenuBar />
      <Toolbar />
      <div className="flex flex-1">
        <Preview />
        <SidePanel />
      </div>
      <Dock />
    </div>
  );
}
